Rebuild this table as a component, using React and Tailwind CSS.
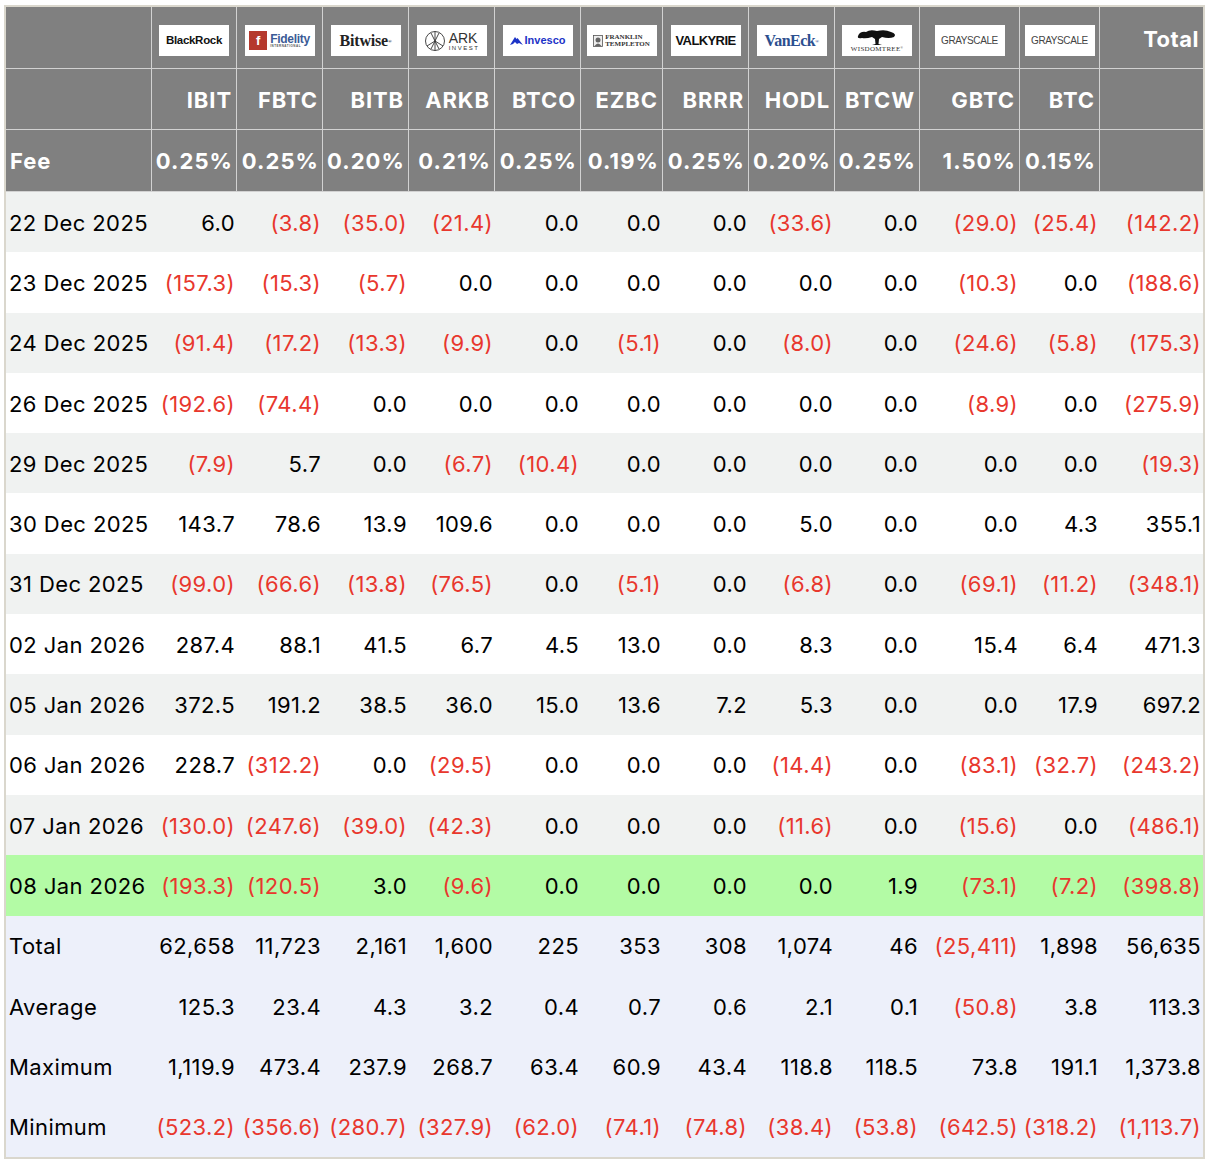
import React from "react";

const cols = "grid grid-cols-[146px_85px_86px_86px_86px_86px_82px_86px_86px_85px_100px_80px_103px]";

const tickers = ["IBIT", "FBTC", "BITB", "ARKB", "BTCO", "EZBC", "BRRR", "HODL", "BTCW", "GBTC", "BTC"];
const fees = ["0.25%", "0.25%", "0.20%", "0.21%", "0.25%", "0.19%", "0.25%", "0.20%", "0.25%", "1.50%", "0.15%"];

const rows = [
  ["22 Dec 2025", "6.0", "(3.8)", "(35.0)", "(21.4)", "0.0", "0.0", "0.0", "(33.6)", "0.0", "(29.0)", "(25.4)", "(142.2)"],
  ["23 Dec 2025", "(157.3)", "(15.3)", "(5.7)", "0.0", "0.0", "0.0", "0.0", "0.0", "0.0", "(10.3)", "0.0", "(188.6)"],
  ["24 Dec 2025", "(91.4)", "(17.2)", "(13.3)", "(9.9)", "0.0", "(5.1)", "0.0", "(8.0)", "0.0", "(24.6)", "(5.8)", "(175.3)"],
  ["26 Dec 2025", "(192.6)", "(74.4)", "0.0", "0.0", "0.0", "0.0", "0.0", "0.0", "0.0", "(8.9)", "0.0", "(275.9)"],
  ["29 Dec 2025", "(7.9)", "5.7", "0.0", "(6.7)", "(10.4)", "0.0", "0.0", "0.0", "0.0", "0.0", "0.0", "(19.3)"],
  ["30 Dec 2025", "143.7", "78.6", "13.9", "109.6", "0.0", "0.0", "0.0", "5.0", "0.0", "0.0", "4.3", "355.1"],
  ["31 Dec 2025", "(99.0)", "(66.6)", "(13.8)", "(76.5)", "0.0", "(5.1)", "0.0", "(6.8)", "0.0", "(69.1)", "(11.2)", "(348.1)"],
  ["02 Jan 2026", "287.4", "88.1", "41.5", "6.7", "4.5", "13.0", "0.0", "8.3", "0.0", "15.4", "6.4", "471.3"],
  ["05 Jan 2026", "372.5", "191.2", "38.5", "36.0", "15.0", "13.6", "7.2", "5.3", "0.0", "0.0", "17.9", "697.2"],
  ["06 Jan 2026", "228.7", "(312.2)", "0.0", "(29.5)", "0.0", "0.0", "0.0", "(14.4)", "0.0", "(83.1)", "(32.7)", "(243.2)"],
  ["07 Jan 2026", "(130.0)", "(247.6)", "(39.0)", "(42.3)", "0.0", "0.0", "0.0", "(11.6)", "0.0", "(15.6)", "0.0", "(486.1)"],
  ["08 Jan 2026", "(193.3)", "(120.5)", "3.0", "(9.6)", "0.0", "0.0", "0.0", "0.0", "1.9", "(73.1)", "(7.2)", "(398.8)"],
];

const stats = [
  ["Total", "62,658", "11,723", "2,161", "1,600", "225", "353", "308", "1,074", "46", "(25,411)", "1,898", "56,635"],
  ["Average", "125.3", "23.4", "4.3", "3.2", "0.4", "0.7", "0.6", "2.1", "0.1", "(50.8)", "3.8", "113.3"],
  ["Maximum", "1,119.9", "473.4", "237.9", "268.7", "63.4", "60.9", "43.4", "118.8", "118.5", "73.8", "191.1", "1,373.8"],
  ["Minimum", "(523.2)", "(356.6)", "(280.7)", "(327.9)", "(62.0)", "(74.1)", "(74.8)", "(38.4)", "(53.8)", "(642.5)", "(318.2)", "(1,113.7)"],
];

function LogoBox({ children }) {
  return (
    <div className="w-[70px] h-[31px] bg-white flex items-center justify-center overflow-hidden font-['Liberation_Sans',Arial,sans-serif] tracking-normal">
      {children}
    </div>
  );
}

const logos = [
  <LogoBox key="br">
    <span className="text-[11.5px] font-bold tracking-[-0.3px] text-[#111]">BlackRock</span>
  </LogoBox>,
  <LogoBox key="fi">
    <div className="flex items-center gap-[3px]">
      <div className="w-[18px] h-[19px] bg-[#b5392d] flex items-center justify-center">
        <span className="text-white text-[13px] font-bold leading-none">f</span>
      </div>
      <div className="flex flex-col leading-none">
        <span className="text-[12px] font-bold text-[#3b5b96] tracking-[-0.3px]">Fidelity</span>
        <span className="text-[3px] text-[#555] tracking-[0.5px]">INTERNATIONAL</span>
      </div>
    </div>
  </LogoBox>,
  <LogoBox key="bw">
    <span className="font-['Liberation_Serif',serif] font-bold text-[16px] text-[#222] tracking-[-0.2px]">Bitwise<sup className="text-[5px]">®</sup></span>
  </LogoBox>,
  <LogoBox key="ark">
    <div className="flex items-center gap-[3px] font-normal">
      <svg width="22" height="22" viewBox="0 0 22 22" fill="none" stroke="#333" strokeWidth="0.9">
        <circle cx="11" cy="11" r="9.5" />
        <path d="M11 1.5 L11 20.5 M11 11 L3 16 M11 11 L19 16 M7 3 L15 19 M15 3 L7 19" />
      </svg>
      <div className="flex flex-col leading-none items-start">
        <span className="text-[14px] text-[#333]">ARK</span>
        <span className="text-[6px] tracking-[1.5px] text-[#333]">INVEST</span>
      </div>
    </div>
  </LogoBox>,
  <LogoBox key="iv">
    <div className="flex items-center gap-[2px]">
      <svg width="13" height="9" viewBox="0 0 13 9">
        <path d="M0 9 L5 1 L6.5 3 L7.5 2 L13 9 L9 7 L7 8 L5 6 L3 8 Z" fill="#1c33c7" />
      </svg>
      <span className="text-[11px] font-bold text-[#1c33c7]">Invesco</span>
    </div>
  </LogoBox>,
  <LogoBox key="ft">
    <div className="flex items-center gap-[2px]">
      <svg width="10" height="12" viewBox="0 0 10 12">
        <rect x="0.5" y="0.5" width="9" height="11" fill="#eee" stroke="#555" strokeWidth="0.8" />
        <circle cx="5" cy="5" r="2.5" fill="#666" />
        <path d="M1.5 11 Q5 6 8.5 11 Z" fill="#666" />
      </svg>
      <div className="flex flex-col leading-[7px] font-['Liberation_Serif',serif] text-[7px] text-[#333] font-bold">
        <span>FRANKLIN</span>
        <span>TEMPLETON</span>
      </div>
    </div>
  </LogoBox>,
  <LogoBox key="vk">
    <span className="text-[13px] font-black tracking-[-0.6px] text-[#111]">VALKYRIE</span>
  </LogoBox>,
  <LogoBox key="ve">
    <span className="font-['Liberation_Serif',serif] text-[16px] font-bold text-[#2c4f8f] tracking-[-0.5px]">VanEck<sup className="text-[5px]">®</sup></span>
  </LogoBox>,
  <LogoBox key="wt">
    <div className="flex flex-col items-center leading-none font-normal">
      <svg width="40" height="17" viewBox="0 0 40 17">
        <path d="M1 7 Q3 2 9 3 Q13 0 20 2 Q28 0 34 3 Q40 5 37 8 Q32 10 25 8 L22 10 L21.5 15 L25 16 L15 16 L18.5 15 L18 10 L15 8 Q9 10 5 9 Q0 10 1 7 Z" fill="#111" />
      </svg>
      <span className="font-['Liberation_Serif',serif] text-[7px] tracking-[0.3px] text-[#333]">WISDOMTREE<sup className="text-[3px]">®</sup></span>
    </div>
  </LogoBox>,
  <LogoBox key="gs1">
    <span className="text-[10px] font-normal tracking-[-0.4px] text-[#444]">GRAYSCALE</span>
  </LogoBox>,
  <LogoBox key="gs2">
    <span className="text-[10px] font-normal tracking-[-0.4px] text-[#444]">GRAYSCALE</span>
  </LogoBox>,
];

function Value({ v }) {
  const neg = v.startsWith("(");
  return <span className={neg ? "text-[#e8372d]" : "text-black"}>{v}</span>;
}

function BodyRow({ cells, bg }) {
  return (
    <div className={`${cols} h-[60.3px] items-center pt-[2px] ${bg}`}>
      {cells.map((c, i) =>
        i === 0 ? (
          <div key={i} className="pl-[3px] text-black whitespace-nowrap">{c}</div>
        ) : (
          <div key={i} className="text-right pr-[2px] whitespace-nowrap">
            <Value v={c} />
          </div>
        )
      )}
    </div>
  );
}

export default function App() {
  const headCell = "border-r border-[#d2d2d2] last:border-r-0 h-full";
  return (
    <div className="pl-[4px] pt-[5px] font-['Inter',sans-serif] bg-white min-h-[1166px]">
      <div className="w-[1201px] border-2 border-[#dad7cd] text-[22px] tracking-[0.4px]">
        <div className="bg-[#808080] text-white font-bold tracking-[0.9px]">
          <div className={`${cols} h-[62px] border-b border-[#d2d2d2]`}>
            <div className={headCell} />
            {logos.map((l, i) => (
              <div key={i} className={`${headCell} flex items-center justify-center pt-[6px]`}>
                {l}
              </div>
            ))}
            <div className="h-full flex items-center justify-end pr-[4px] pt-[4px] tracking-[0.5px]">Total</div>
          </div>
          <div className={`${cols} h-[61px] border-b border-[#d2d2d2]`}>
            <div className={headCell} />
            {tickers.map((t) => (
              <div key={t} className={`${headCell} flex items-center justify-end pr-[4px] pt-[3px]`}>
                {t}
              </div>
            ))}
            <div className="h-full" />
          </div>
          <div className={`${cols} h-[62px] border-b border-[#d2d2d2]`}>
            <div className={`${headCell} flex items-center pl-[4px] pt-[2px]`}>Fee</div>
            {fees.map((f, i) => (
              <div key={i} className={`${headCell} flex items-center justify-end pr-[3px] pt-[2px] whitespace-nowrap tracking-[1.1px]`}>
                {f}
              </div>
            ))}
            <div className="h-full" />
          </div>
        </div>
        {rows.map((r, i) => (
          <BodyRow
            key={r[0]}
            cells={r}
            bg={i === rows.length - 1 ? "bg-[#b3fba5]" : i % 2 === 0 ? "bg-[#f0f2f1]" : "bg-white"}
          />
        ))}
        {stats.map((r) => (
          <BodyRow key={r[0]} cells={r} bg="bg-[#edf0fa]" />
        ))}
      </div>
    </div>
  );
}
